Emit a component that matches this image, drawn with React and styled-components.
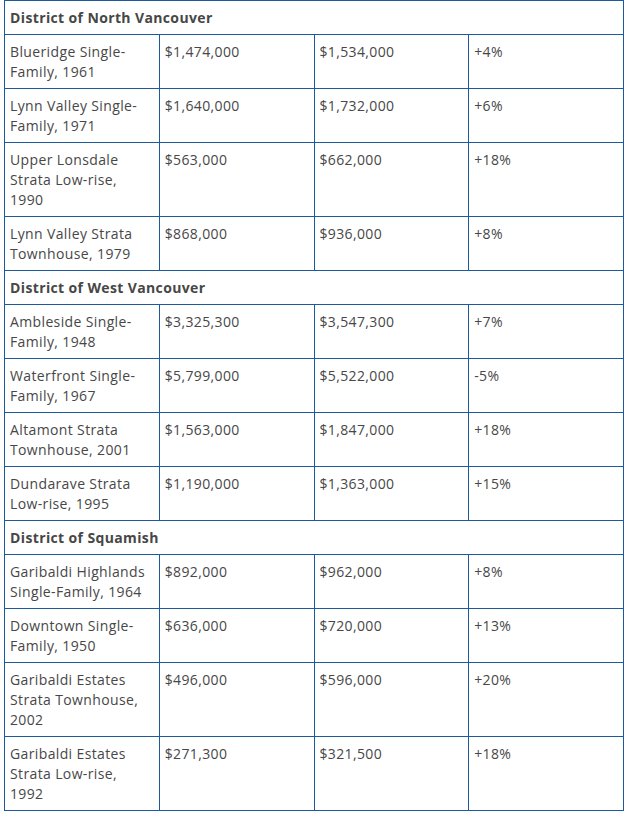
import styled, { createGlobalStyle } from 'styled-components';

const GlobalStyle = createGlobalStyle`
  body {
    margin: 0;
    background: #fff;
    font-family: "Open Sans", "Liberation Sans", sans-serif;
  }
`;

const Wrapper = styled.div`
  padding: 0 0 0 4px;
`;

const Table = styled.table`
  width: 620px;
  border-collapse: collapse;
  table-layout: fixed;
  color: #474747;
  font-size: 14px;
  letter-spacing: 0.37px;
  line-height: 20px;
`;

const Cell = styled.td`
  border: 1px solid #1c5a9c;
  padding: 7px 6px 6px 5px;
  vertical-align: top;
  font-weight: ${(props) => (props.head ? 700 : 500)};
`;

const sections = [
  {
    title: 'District of North Vancouver',
    rows: [
      ['Blueridge Single-Family, 1961', '$1,474,000', '$1,534,000', '+4%'],
      ['Lynn Valley Single-Family, 1971', '$1,640,000', '$1,732,000', '+6%'],
      ['Upper Lonsdale Strata Low-rise, 1990', '$563,000', '$662,000', '+18%'],
      ['Lynn Valley Strata Townhouse, 1979', '$868,000', '$936,000', '+8%'],
    ],
  },
  {
    title: 'District of West Vancouver',
    rows: [
      ['Ambleside Single-Family, 1948', '$3,325,300', '$3,547,300', '+7%'],
      ['Waterfront Single-Family, 1967', '$5,799,000', '$5,522,000', '-5%'],
      ['Altamont Strata Townhouse, 2001', '$1,563,000', '$1,847,000', '+18%'],
      ['Dundarave Strata Low-rise, 1995', '$1,190,000', '$1,363,000', '+15%'],
    ],
  },
  {
    title: 'District of Squamish',
    rows: [
      ['Garibaldi Highlands Single-Family, 1964', '$892,000', '$962,000', '+8%'],
      ['Downtown Single-Family, 1950', '$636,000', '$720,000', '+13%'],
      ['Garibaldi Estates Strata Townhouse, 2002', '$496,000', '$596,000', '+20%'],
      ['Garibaldi Estates Strata Low-rise, 1992', '$271,300', '$321,500', '+18%'],
    ],
  },
];

const App = () => {
  return (
    <Wrapper>
      <GlobalStyle />
      <Table>
        <tbody>
          {sections.map((section) => [
            <tr key={section.title}>
              <Cell head colSpan={4}>{section.title}</Cell>
            </tr>,
            ...section.rows.map((row) => (
              <tr key={row[0]}>
                {row.map((value, i) => (
                  <Cell key={i}>{value}</Cell>
                ))}
              </tr>
            )),
          ])}
        </tbody>
      </Table>
    </Wrapper>
  );
};

export default App;
